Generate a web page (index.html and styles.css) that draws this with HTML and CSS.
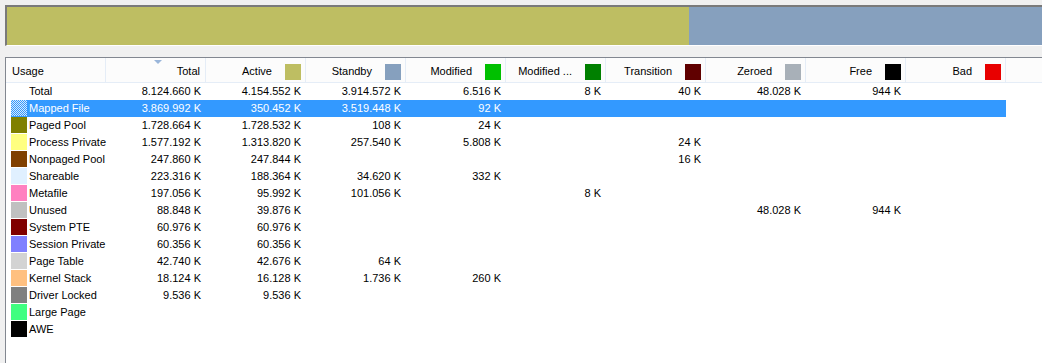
FILE: index.html
```html
<!DOCTYPE html>
<html>
<head>
<meta charset="utf-8">
<link rel="stylesheet" href="styles.css">
</head>
<body>
<div class="bar">
  <div class="seg seg-active"></div>
  <div class="seg seg-standby"></div>
</div>
<div class="list">
  <div class="header">
    <div class="hcell hleft">Usage</div>
    <div class="hcell sorted">Total<span class="arrow"></span></div>
    <div class="hcell">Active<span class="sw c-active"></span></div>
    <div class="hcell">Standby<span class="sw c-standby"></span></div>
    <div class="hcell">Modified<span class="sw c-modified"></span></div>
    <div class="hcell">Modified ...<span class="sw c-modnw"></span></div>
    <div class="hcell">Transition<span class="sw c-transition"></span></div>
    <div class="hcell">Zeroed<span class="sw c-zeroed"></span></div>
    <div class="hcell">Free<span class="sw c-free"></span></div>
    <div class="hcell">Bad<span class="sw c-bad"></span></div>
  </div>
  <div class="rows">
    <div class="row"><div class="name"><span class="rsw"></span>Total</div><div>8.124.660 K</div><div>4.154.552 K</div><div>3.914.572 K</div><div>6.516 K</div><div>8 K</div><div>40 K</div><div>48.028 K</div><div>944 K</div><div></div></div>
    <div class="row selected"><div class="name"><span class="rsw r-mapped"></span>Mapped File</div><div>3.869.992 K</div><div>350.452 K</div><div>3.519.448 K</div><div>92 K</div><div></div><div></div><div></div><div></div><div></div></div>
    <div class="row"><div class="name"><span class="rsw r-paged"></span>Paged Pool</div><div>1.728.664 K</div><div>1.728.532 K</div><div>108 K</div><div>24 K</div><div></div><div></div><div></div><div></div><div></div></div>
    <div class="row"><div class="name"><span class="rsw r-private"></span>Process Private</div><div>1.577.192 K</div><div>1.313.820 K</div><div>257.540 K</div><div>5.808 K</div><div></div><div>24 K</div><div></div><div></div><div></div></div>
    <div class="row"><div class="name"><span class="rsw r-nonpaged"></span>Nonpaged Pool</div><div>247.860 K</div><div>247.844 K</div><div></div><div></div><div></div><div>16 K</div><div></div><div></div><div></div></div>
    <div class="row"><div class="name"><span class="rsw r-share"></span>Shareable</div><div>223.316 K</div><div>188.364 K</div><div>34.620 K</div><div>332 K</div><div></div><div></div><div></div><div></div><div></div></div>
    <div class="row"><div class="name"><span class="rsw r-meta"></span>Metafile</div><div>197.056 K</div><div>95.992 K</div><div>101.056 K</div><div></div><div>8 K</div><div></div><div></div><div></div><div></div></div>
    <div class="row"><div class="name"><span class="rsw r-unused"></span>Unused</div><div>88.848 K</div><div>39.876 K</div><div></div><div></div><div></div><div></div><div>48.028 K</div><div>944 K</div><div></div></div>
    <div class="row"><div class="name"><span class="rsw r-pte"></span>System PTE</div><div>60.976 K</div><div>60.976 K</div><div></div><div></div><div></div><div></div><div></div><div></div><div></div></div>
    <div class="row"><div class="name"><span class="rsw r-session"></span>Session Private</div><div>60.356 K</div><div>60.356 K</div><div></div><div></div><div></div><div></div><div></div><div></div><div></div></div>
    <div class="row"><div class="name"><span class="rsw r-pagetable"></span>Page Table</div><div>42.740 K</div><div>42.676 K</div><div>64 K</div><div></div><div></div><div></div><div></div><div></div><div></div></div>
    <div class="row"><div class="name"><span class="rsw r-kstack"></span>Kernel Stack</div><div>18.124 K</div><div>16.128 K</div><div>1.736 K</div><div>260 K</div><div></div><div></div><div></div><div></div><div></div></div>
    <div class="row"><div class="name"><span class="rsw r-driver"></span>Driver Locked</div><div>9.536 K</div><div>9.536 K</div><div></div><div></div><div></div><div></div><div></div><div></div><div></div></div>
    <div class="row"><div class="name"><span class="rsw r-large"></span>Large Page</div><div></div><div></div><div></div><div></div><div></div><div></div><div></div><div></div><div></div></div>
    <div class="row"><div class="name"><span class="rsw r-awe"></span>AWE</div><div></div><div></div><div></div><div></div><div></div><div></div><div></div><div></div><div></div></div>
  </div>
</div>
</body>
</html>
```
FILE: styles.css
```css
html, body {
  margin: 0;
  padding: 0;
}
body {
  background: #f0f0f0;
  font-family: "Liberation Sans", Arial, sans-serif;
  font-size: 11px;
  color: #000;
  width: 1042px;
  height: 363px;
  overflow: hidden;
}
.bar {
  margin: 5px 0 0 5px;
  height: 38px;
  border-top: 2px solid #7a7a7a;
  border-left: 2px solid #7a7a7a;
  border-bottom: 1px solid #ffffff;
  display: flex;
}
.seg-active {
  width: 682px;
  background: #bebe62;
}
.seg-standby {
  flex: 1;
  background: #86a0be;
}
.list {
  margin: 11px 0 0 5px;
  height: 305px;
  border-top: 1px solid #828790;
  border-left: 1px solid #828790;
  background: #ffffff;
  overflow: hidden;
}
.header {
  display: flex;
  height: 24px;
  border-bottom: 1px solid #e5edf7;
  background: #fcfcfc;
}
.hcell {
  box-sizing: border-box;
  width: 100px;
  flex: none;
  border-right: 1px solid #e5edf7;
  display: flex;
  align-items: center;
  justify-content: flex-end;
  gap: 13px;
  padding: 2px 4px 0 6px;
  position: relative;
}
.hleft {
  justify-content: flex-start;
}
.sorted {
  padding-right: 5px;
}
.arrow {
  position: absolute;
  top: 2px;
  left: 48px;
  width: 0;
  height: 0;
  border-left: 4px solid transparent;
  border-right: 4px solid transparent;
  border-top: 4px solid #9ab6da;
}
.sw {
  width: 16px;
  height: 16px;
  flex: none;
  margin-top: 1px;
}
.c-active { background: #bebe62; }
.c-standby { background: #86a0be; }
.c-modified { background: #00c000; }
.c-modnw { background: #008000; }
.c-transition { background: #600000; }
.c-zeroed { background: #a8b0b8; }
.c-free { background: #000000; }
.c-bad { background: #e80000; }

.rows {
  display: flex;
  flex-direction: column;
}
.row {
  margin-left: 5px;
  width: 995px;
  height: 17px;
  display: grid;
  grid-template-columns: 95px repeat(9, 100px);
  line-height: 17px;
}
.row > div {
  text-align: right;
  padding-right: 5px;
  white-space: nowrap;
}
.row > .name {
  text-align: left;
  display: flex;
  align-items: flex-start;
  gap: 2px;
  padding-right: 0;
}
.rsw {
  width: 16px;
  height: 16px;
  flex: none;
}
.selected {
  background: #3399ff;
  color: #ffffff;
}
.r-mapped {
  background: repeating-conic-gradient(#3399ff 0 25%, #d6e8fb 0 50%) 0 0 / 2px 2px;
}
.r-paged { background: #808000; }
.r-private { background: #ffff80; }
.r-nonpaged { background: #804000; }
.r-share { background: #e0f0ff; }
.r-meta { background: #ff80c0; }
.r-unused { background: #c0c0c0; }
.r-pte { background: #800000; }
.r-session { background: #8080ff; }
.r-pagetable { background: #d3d3d3; }
.r-kstack { background: #ffc080; }
.r-driver { background: #808080; }
.r-large { background: #40ff80; }
.r-awe { background: #000000; }
```
